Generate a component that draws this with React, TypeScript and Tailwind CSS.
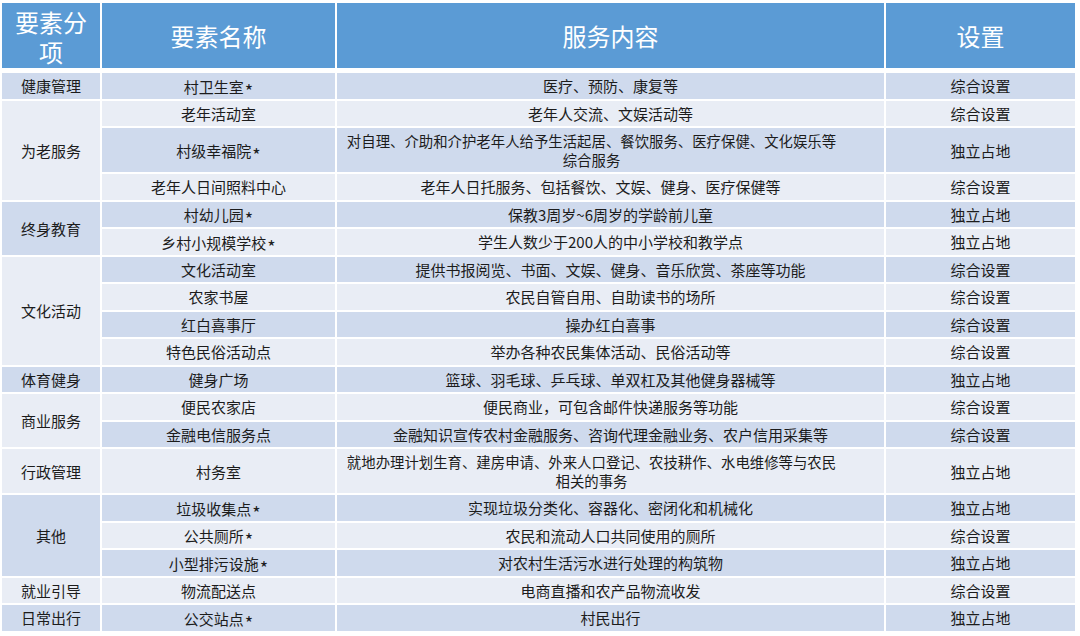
import React from "react";

type Row = { name: string; star?: boolean; content: React.ReactNode; setting: string; dark: boolean; tall?: boolean };

const rows: Row[] = [
  { name: "村卫生室", star: true, content: "医疗、预防、康复等", setting: "综合设置", dark: true },
  { name: "老年活动室", content: "老年人交流、文娱活动等", setting: "综合设置", dark: false },
  {
    name: "村级幸福院",
    star: true,
    content: (
      <span className="block pr-[38px] whitespace-nowrap text-[14.4px]">
        对自理、介助和介护老年人给予生活起居、餐饮服务、医疗保健、文化娱乐等
        <br />
        综合服务
      </span>
    ),
    setting: "独立占地",
    dark: true,
    tall: true,
  },
  {
    name: "老年人日间照料中心",
    content: <span className="block pr-[20px]">老年人日托服务、包括餐饮、文娱、健身、医疗保健等</span>,
    setting: "综合设置",
    dark: false,
  },
  { name: "村幼儿园", star: true, content: "保教3周岁~6周岁的学龄前儿童", setting: "独立占地", dark: true },
  { name: "乡村小规模学校", star: true, content: "学生人数少于200人的中小学校和教学点", setting: "独立占地", dark: false },
  { name: "文化活动室", content: "提供书报阅览、书面、文娱、健身、音乐欣赏、茶座等功能", setting: "综合设置", dark: true },
  { name: "农家书屋", content: "农民自管自用、自助读书的场所", setting: "综合设置", dark: false },
  { name: "红白喜事厅", content: "操办红白喜事", setting: "综合设置", dark: true },
  { name: "特色民俗活动点", content: "举办各种农民集体活动、民俗活动等", setting: "综合设置", dark: false },
  { name: "健身广场", content: "篮球、羽毛球、乒乓球、单双杠及其他健身器械等", setting: "独立占地", dark: true },
  { name: "便民农家店", content: "便民商业，可包含邮件快递服务等功能", setting: "综合设置", dark: false },
  { name: "金融电信服务点", content: "金融知识宣传农村金融服务、咨询代理金融业务、农户信用采集等", setting: "综合设置", dark: true },
  {
    name: "村务室",
    content: (
      <span className="block pr-[38px] whitespace-nowrap text-[14.4px]">
        就地办理计划生育、建房申请、外来人口登记、农技耕作、水电维修等与农民
        <br />
        相关的事务
      </span>
    ),
    setting: "独立占地",
    dark: false,
    tall: true,
  },
  { name: "垃圾收集点", star: true, content: "实现垃圾分类化、容器化、密闭化和机械化", setting: "独立占地", dark: true },
  { name: "公共厕所", star: true, content: "农民和流动人口共同使用的厕所", setting: "综合设置", dark: false },
  { name: "小型排污设施", star: true, content: "对农村生活污水进行处理的构筑物", setting: "独立占地", dark: true },
  { name: "物流配送点", content: "电商直播和农产品物流收发", setting: "综合设置", dark: false },
  { name: "公交站点", star: true, content: "村民出行", setting: "独立占地", dark: true },
];

type Group = { label: string; start: number; span: number; dark: boolean };
const groups: Group[] = [
  { label: "健康管理", start: 0, span: 1, dark: true },
  { label: "为老服务", start: 1, span: 3, dark: false },
  { label: "终身教育", start: 4, span: 2, dark: true },
  { label: "文化活动", start: 6, span: 4, dark: false },
  { label: "体育健身", start: 10, span: 1, dark: true },
  { label: "商业服务", start: 11, span: 2, dark: false },
  { label: "行政管理", start: 13, span: 1, dark: false },
  { label: "其他", start: 14, span: 3, dark: true },
  { label: "就业引导", start: 17, span: 1, dark: false },
  { label: "日常出行", start: 18, span: 1, dark: true },
];

const spanClass: Record<number, string> = {
  1: "row-span-1",
  2: "row-span-2",
  3: "row-span-3",
  4: "row-span-4",
};

const DARK = "bg-[#cfdaed]";
const LIGHT = "bg-[#e9edf5]";

const cell = "flex items-center justify-center text-center";

export default function App() {
  const items: React.ReactNode[] = [];
  rows.forEach((r, i) => {
    const g = groups.find((gg) => gg.start === i);
    if (g) {
      items.push(
        <div key={`g${i}`} className={`${cell} col-start-1 ${spanClass[g.span]} ${g.dark ? DARK : LIGHT}`}>
          {g.label}
        </div>
      );
    }
    const bg = r.dark ? DARK : LIGHT;
    items.push(
      <div key={`n${i}`} className={`${cell} col-start-2 ${bg}`}>
        <span>
          {r.name}
          {r.star && (
            <span className="inline-block translate-y-[5px] text-[18px] leading-[19px] ml-[1px]">*</span>
          )}
        </span>
      </div>
    );
    items.push(
      <div key={`c${i}`} className={`${cell} col-start-3 ${bg}`}>
        {r.content}
      </div>
    );
    items.push(
      <div key={`s${i}`} className={`${cell} col-start-4 ${bg}`}>
        {r.setting}
      </div>
    );
  });

  return (
    <div
      className="w-[1080px] h-[636px] bg-white pl-[2px] pt-[3px] overflow-hidden"
      style={{ fontFamily: '"Noto Sans CJK SC", "Noto Sans", sans-serif' }}
    >
      <div className="grid grid-cols-[98px_233px_547px_189px] gap-x-[2px] h-[65px] text-white text-[24px] leading-[30px]">
        <div className={`${cell} bg-[#5b9bd5] px-[8px] pt-[3px]`}>要素分项</div>
        <div className={`${cell} bg-[#5b9bd5]`}>要素名称</div>
        <div className={`${cell} bg-[#5b9bd5]`}>服务内容</div>
        <div className={`${cell} bg-[#5b9bd5]`}>设置</div>
      </div>
      <div className="mt-[5px] grid grid-cols-[98px_233px_547px_189px] grid-rows-[25.5px_25.5px_44px_25.5px_25.5px_25.5px_25.5px_25.5px_25.5px_25.5px_25.5px_25.5px_25.5px_44px_25.5px_25.5px_25.5px_25.5px_25.5px] gap-[2px] text-[15px] leading-[19px] text-[#1c1c1c]">
        {items}
      </div>
    </div>
  );
}
